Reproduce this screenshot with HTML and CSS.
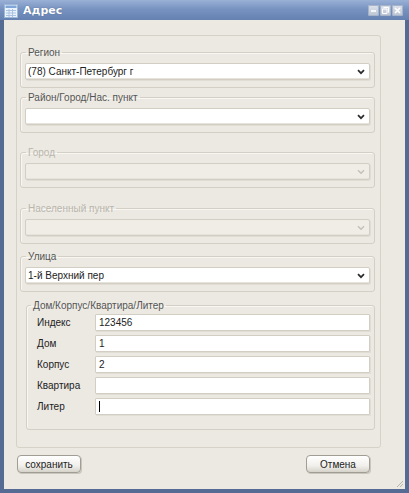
FILE: index.html
```html
<!DOCTYPE html>
<html lang="ru">
<head>
    <meta charset="UTF-8">
    <meta name="viewport" content="width=device-width, initial-scale=1.0">
    <title>Адрес</title>
    <link rel="stylesheet" href="styles.css">
</head>
<body>

<div class="window">
    <div class="titlebar">
        <svg class="app-icon" width="14" height="14" viewBox="0 0 14 14">
            <rect x="0.5" y="0.5" width="13" height="13" fill="#eaf2fb" stroke="#9db7d8"/>
            <rect x="1.5" y="1.5" width="11" height="2.5" fill="#7fa6d6"/>
            <path d="M2 6.5 H12 M2 9 H12 M2 11.5 H12 M5 5 V13 M8.5 5 V13" stroke="#a9c2e2" stroke-width="1"/>
        </svg>
        <span class="title">Адрес</span>
        <div class="controls">
            <span class="ctl">
                <svg width="11" height="11" viewBox="0 0 11 11"><path d="M3 6 H8" stroke="#fff" stroke-width="1.6"/></svg>
            </span>
            <span class="ctl">
                <svg width="11" height="11" viewBox="0 0 11 11"><path d="M3.5 2.5 H8.5 V7.5 M2.5 4 H7 V8.5 H2.5 Z" stroke="#fff" stroke-width="1" fill="none"/></svg>
            </span>
            <span class="ctl">
                <svg width="11" height="11" viewBox="0 0 11 11"><path d="M3 3 L8 8 M8 3 L3 8" stroke="#fff" stroke-width="1.6"/></svg>
            </span>
        </div>
    </div>

    <div class="client">
        <div class="panel">
            <fieldset class="group g-region">
                <legend>Регион</legend>
                <div class="combo">
                    <span>(78) Санкт-Петербург г</span>
                    <svg class="chev" width="8" height="6" viewBox="0 0 8 6"><path d="M1 1.2 L4 4.2 L7 1.2" stroke="#2b2b2b" stroke-width="1.7" fill="none"/></svg>
                </div>
            </fieldset>

            <fieldset class="group g-area">
                <legend>Район/Город/Нас. пункт</legend>
                <div class="combo">
                    <span></span>
                    <svg class="chev" width="8" height="6" viewBox="0 0 8 6"><path d="M1 1.2 L4 4.2 L7 1.2" stroke="#2b2b2b" stroke-width="1.7" fill="none"/></svg>
                </div>
            </fieldset>

            <fieldset class="group g-city disabled">
                <legend>Город</legend>
                <div class="combo">
                    <span></span>
                    <svg class="chev" width="8" height="6" viewBox="0 0 8 6"><path d="M1 1.2 L4 4.2 L7 1.2" stroke="#c4c1b8" stroke-width="1.5" fill="none"/></svg>
                </div>
            </fieldset>

            <fieldset class="group g-place disabled">
                <legend>Населенный пункт</legend>
                <div class="combo">
                    <span></span>
                    <svg class="chev" width="8" height="6" viewBox="0 0 8 6"><path d="M1 1.2 L4 4.2 L7 1.2" stroke="#c4c1b8" stroke-width="1.5" fill="none"/></svg>
                </div>
            </fieldset>

            <fieldset class="group g-street">
                <legend>Улица</legend>
                <div class="combo">
                    <span>1-й Верхний пер</span>
                    <svg class="chev" width="8" height="6" viewBox="0 0 8 6"><path d="M1 1.2 L4 4.2 L7 1.2" stroke="#2b2b2b" stroke-width="1.7" fill="none"/></svg>
                </div>
            </fieldset>

            <fieldset class="group g-house">
                <legend>Дом/Корпус/Квартира/Литер</legend>
                <div class="rows">
                    <div class="row"><label>Индекс</label><div class="field">123456</div></div>
                    <div class="row"><label>Дом</label><div class="field">1</div></div>
                    <div class="row"><label>Корпус</label><div class="field">2</div></div>
                    <div class="row"><label>Квартира</label><div class="field"></div></div>
                    <div class="row"><label>Литер</label><div class="field"><span class="caret"></span></div></div>
                </div>
            </fieldset>
        </div>

        <div class="actions">
            <button class="btn">сохранить</button>
            <button class="btn">Отмена</button>
        </div>

        <svg class="grip" width="9" height="9" viewBox="0 0 9 9">
            <path d="M8 2 L2 8 M8 5 L5 8" stroke="#b9b5aa" stroke-width="1"/>
        </svg>
    </div>
</div>

</body>
</html>
```

FILE: styles.css
```css
body {
    margin: 0;
    padding: 0;
    font-family: "Liberation Sans", Arial, sans-serif;
    font-size: 10px;
    color: #222;
    background: #fff;
}

.window {
    width: 409px;
    height: 493px;
    display: flex;
    flex-direction: column;
    background: #566b93;
    box-sizing: border-box;
}

/* title bar */
.titlebar {
    height: 20px;
    display: flex;
    align-items: center;
    padding: 0 6px 0 4px;
    background: linear-gradient(#9ab1d6, #7893c0 45%, #6581b1);
    flex-shrink: 0;
}

.app-icon {
    display: block;
    margin-top: 1px;
}

.title {
    margin-left: 5px;
    color: #fff;
    font-family: "DejaVu Sans", sans-serif;
    font-weight: bold;
    font-size: 11px;
    text-shadow: 0 0 1px #3d5580;
}

.controls {
    margin-left: auto;
    display: flex;
    gap: 1px;
    margin-top: 1px;
}

.ctl {
    width: 11px;
    height: 11px;
    border-radius: 2px;
    background: linear-gradient(#dfe4ec, #b9c3d3);
    box-shadow: inset 0 0 0 1px #a6b3c9;
}

.ctl svg {
    display: block;
}

/* client area */
.client {
    position: relative;
    flex: 1;
    margin: 0 4px 4px;
    background: #ece9e2;
    padding: 15px 24px 0 12px;
}

.panel {
    border: 1px solid #d6d2c7;
    border-radius: 3px;
    padding: 0 5px 17px 3px;
}

.group {
    margin: 0;
    border: 1px solid #d3cfc4;
    border-radius: 3px;
    padding: 0 4px 7px 4px;
    box-shadow: inset 1px 1px 0 #f8f7f3;
}

.group legend {
    padding: 0 2px;
    margin-left: 1px;
    line-height: 13px;
    color: #555;
}

.g-region { margin-top: 10px; }
.g-area { margin-top: 3px; }
.g-city { margin-top: 13px; }
.g-place { margin-top: 14px; }
.g-street { margin-top: 6px; }

.g-house {
    margin: 7px 0 0 6px;
    padding-bottom: 14px;
}

.g-house legend {
    margin-left: 0;
}

.disabled legend {
    color: #b9b6ad;
}

/* combo boxes */
.combo {
    margin-top: 4px;
    height: 17px;
    box-sizing: border-box;
    display: flex;
    align-items: center;
    padding: 0 4px 0 2px;
    background: #fff;
    border: 1px solid #d2cec4;
    border-radius: 2px;
    box-shadow: inset 0 -1px 0 #e6e3dc, 1px 1px 0 #e0ddd5;
}

.combo span {
    flex: 1;
    white-space: nowrap;
}

.chev {
    display: block;
}

.disabled .combo {
    background: #efede6;
}

/* house fields */
.rows {
    margin-top: 2px;
    padding-left: 6px;
    display: flex;
    flex-direction: column;
    gap: 4px;
}

.row {
    display: flex;
    align-items: center;
}

.row label {
    width: 58px;
    flex-shrink: 0;
}

.field {
    flex: 1;
    height: 17px;
    box-sizing: border-box;
    display: flex;
    align-items: center;
    padding-left: 3px;
    background: #fff;
    border: 1px solid #d2cec4;
    border-radius: 1px;
    box-shadow: 1px 1px 0 #e0ddd5;
}

.caret {
    width: 1px;
    height: 11px;
    background: #000;
}

/* bottom buttons */
.actions {
    display: flex;
    justify-content: space-between;
    margin-top: 7px;
    padding: 0 11px 0 1px;
}

.btn {
    width: 64px;
    height: 18px;
    padding: 0;
    font-family: "Liberation Sans", Arial, sans-serif;
    font-size: 10px;
    color: #222;
    background: linear-gradient(#ffffff, #f1f0ec 60%, #d6d3ca);
    border: 1px solid #a09d95;
    border-radius: 4px;
    box-shadow: 1px 1px 0 #c9c6bd;
    cursor: pointer;
}

.grip {
    position: absolute;
    right: 1px;
    bottom: 1px;
}
```
